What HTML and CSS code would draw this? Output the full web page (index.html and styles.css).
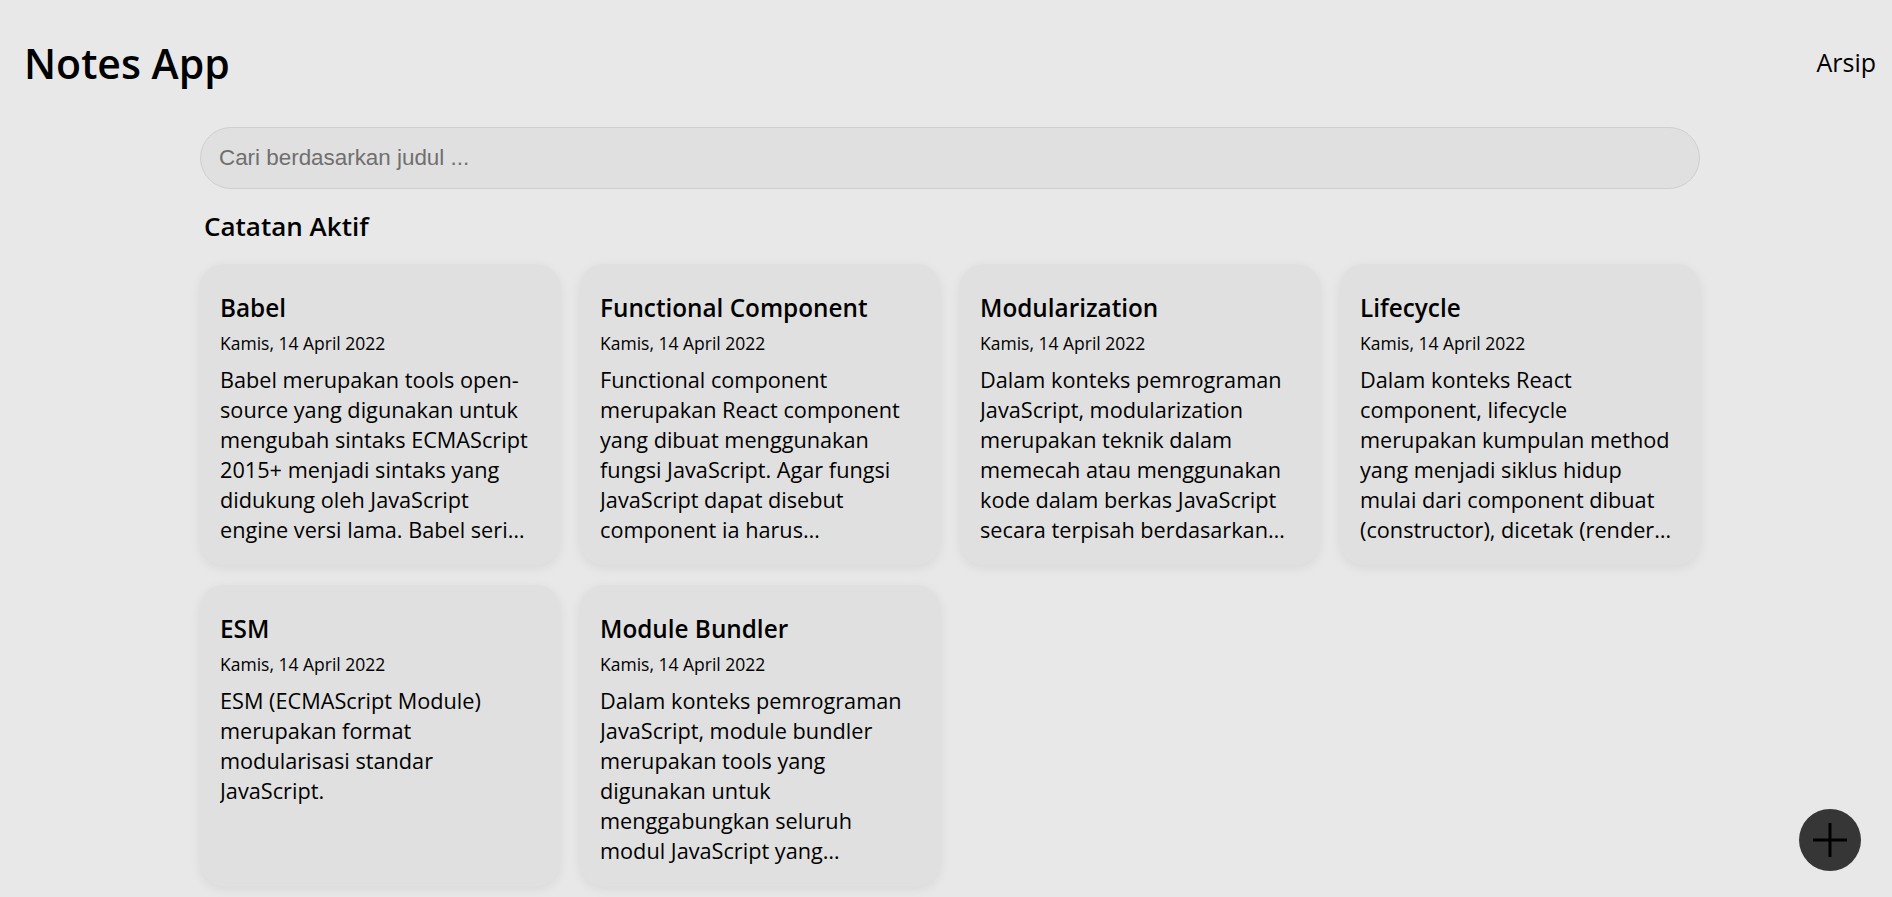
FILE: index.html
```html
<!DOCTYPE html>
<html lang="id">
<head>
<meta charset="utf-8">
<title>Notes App</title>
<link rel="stylesheet" href="styles.css">
</head>
<body>
<header class="app-header">
  <h1 class="app-title">Notes App</h1>
  <nav class="app-nav"><a class="nav-link" href="#">Arsip</a></nav>
</header>
<main class="main">
  <div class="search-bar">
    <input class="search-input" type="text" placeholder="Cari berdasarkan judul ...">
  </div>
  <h2 class="section-title">Catatan Aktif</h2>
  <section class="notes-list">
    <article class="note-item">
      <h3 class="note-title">Babel</h3>
      <p class="note-date">Kamis, 14 April 2022</p>
      <p class="note-body">Babel merupakan tools open-source yang digunakan untuk mengubah sintaks ECMAScript 2015+ menjadi sintaks yang didukung oleh JavaScript engine versi lama. Babel sering dipakai ketika kita menggunakan sintaks terbaru termasuk sintaks JSX.</p>
    </article>
    <article class="note-item">
      <h3 class="note-title">Functional Component</h3>
      <p class="note-date">Kamis, 14 April 2022</p>
      <p class="note-body">Functional component merupakan React component yang dibuat menggunakan fungsi JavaScript. Agar fungsi JavaScript dapat disebut component ia harus mengembalikan React element dan dipanggil layaknya React component.</p>
    </article>
    <article class="note-item">
      <h3 class="note-title">Modularization</h3>
      <p class="note-date">Kamis, 14 April 2022</p>
      <p class="note-body">Dalam konteks pemrograman JavaScript, modularization merupakan teknik dalam memecah atau menggunakan kode dalam berkas JavaScript secara terpisah berdasarkan tanggung jawabnya masing-masing.</p>
    </article>
    <article class="note-item">
      <h3 class="note-title">Lifecycle</h3>
      <p class="note-date">Kamis, 14 April 2022</p>
      <p class="note-body">Dalam konteks React component, lifecycle merupakan kumpulan method yang menjadi siklus hidup mulai dari component dibuat (constructor), dicetak (render), pasca-cetak (componentDidMount), dan sebagainya.</p>
    </article>
    <article class="note-item">
      <h3 class="note-title">ESM</h3>
      <p class="note-date">Kamis, 14 April 2022</p>
      <p class="note-body">ESM (ECMAScript Module) merupakan format modularisasi standar JavaScript.</p>
    </article>
    <article class="note-item">
      <h3 class="note-title">Module Bundler</h3>
      <p class="note-date">Kamis, 14 April 2022</p>
      <p class="note-body">Dalam konteks pemrograman JavaScript, module bundler merupakan tools yang digunakan untuk menggabungkan seluruh modul JavaScript yang digunakan oleh aplikasi menjadi satu berkas.</p>
    </article>
  </section>
</main>
<button class="fab" type="button" aria-label="Tambah catatan">
  <svg viewBox="0 0 34 34" width="34" height="34"><path d="M17 0v34M0 17h34" stroke="#000" stroke-width="3" fill="none"/></svg>
</button>
</body>
</html>
```
FILE: styles.css
```css
* { box-sizing: border-box; }

body {
  margin: 0;
  background: #e8e8e8;
  color: #000;
  font-family: "Open Sans", "Noto Sans", sans-serif;
}

.app-header {
  display: flex;
  justify-content: space-between;
  align-items: flex-start;
  padding: 38px 16px 0 24px;
}

.app-title {
  margin: 0;
  font-size: 41px;
  font-weight: 600;
  line-height: 50px;
}

.app-nav {
  margin-top: 9px;
}

.nav-link {
  color: #000;
  text-decoration: none;
  font-size: 25px;
  line-height: 30px;
}

.main {
  padding: 39px 192px 40px 200px;
}

.search-input {
  display: block;
  width: 100%;
  height: 62px;
  padding: 0 18px;
  border: 1px solid #cfcfcf;
  border-radius: 31px;
  background: #e0e0e0;
  font-family: "Liberation Sans", Arial, sans-serif;
  font-size: 22.4px;
  color: #000;
  outline: none;
}

.search-input::placeholder {
  color: #6f6f6f;
}

.section-title {
  margin: 20px 0 21px;
  padding-left: 4px;
  font-size: 26px;
  font-weight: 600;
  line-height: 34px;
}

.notes-list {
  display: grid;
  grid-template-columns: repeat(4, 1fr);
  gap: 20px;
}

.note-item {
  padding: 29px 24px 20px 20px;
  border-radius: 24px;
  background: #e0e0e0;
  box-shadow: 0 3px 12px rgba(0, 0, 0, 0.07);
}

.note-title {
  margin: 0 0 8px;
  font-size: 24.3px;
  font-weight: 600;
  line-height: 30px;
}

.note-date {
  margin: 0 0 10px;
  font-size: 17.5px;
  line-height: 24px;
}

.note-body {
  margin: 0;
  font-size: 21.7px;
  line-height: 30px;
  display: -webkit-box;
  -webkit-line-clamp: 6;
  -webkit-box-orient: vertical;
  overflow: hidden;
}

.fab {
  position: fixed;
  right: 31px;
  bottom: 26px;
  width: 62px;
  height: 62px;
  padding: 0;
  border: none;
  border-radius: 50%;
  background: #363636;
  display: flex;
  align-items: center;
  justify-content: center;
  cursor: pointer;
}
```
